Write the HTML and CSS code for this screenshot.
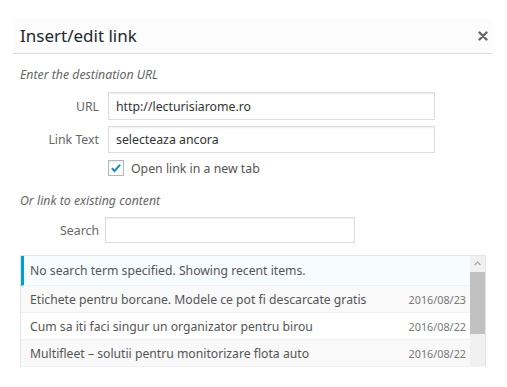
FILE: index.html
```html
<!DOCTYPE html>
<html>
<head>
<meta charset="utf-8">
<link rel="stylesheet" href="styles.css">
</head>
<body>
<div class="dialog">
  <div class="head">
    <h1 class="title">Insert/edit link</h1>
    <button class="close" aria-label="Close">
      <svg width="10" height="10" viewBox="0 0 10 10"><path d="M1.5 1.5 L8.5 8.5 M8.5 1.5 L1.5 8.5" stroke="#666" stroke-width="2.4" stroke-linecap="round"/></svg>
    </button>
  </div>
  <div class="body">
    <p class="hint hint-first">Enter the destination URL</p>
    <div class="field field-url">
      <label class="label">URL</label>
      <div class="input input-url">http://lecturisiarome.ro</div>
    </div>
    <div class="field field-text">
      <label class="label">Link Text</label>
      <div class="input input-text">selecteaza ancora</div>
    </div>
    <div class="check-row">
      <span class="checkbox">
        <svg width="14" height="14" viewBox="0 0 14 14"><path d="M2.8 7.2 L5.6 10 L11.2 3.6" fill="none" stroke="#1e8cbe" stroke-width="2"/></svg>
      </span>
      <span class="check-label">Open link in a new tab</span>
    </div>
    <p class="hint hint-second">Or link to existing content</p>
    <div class="field field-search">
      <label class="label label-search">Search</label>
      <div class="input input-search"></div>
    </div>
    <div class="results">
      <ul class="list">
        <li class="item notice">No search term specified. Showing recent items.</li>
        <li class="item alt"><span class="item-title">Etichete pentru borcane. Modele ce pot fi descarcate gratis</span><span class="date">2016/08/23</span></li>
        <li class="item"><span class="item-title">Cum sa iti faci singur un organizator pentru birou</span><span class="date">2016/08/22</span></li>
        <li class="item alt"><span class="item-title">Multifleet – solutii pentru monitorizare flota auto</span><span class="date">2016/08/22</span></li>
      </ul>
      <div class="scrollbar">
        <div class="arrow">
          <svg width="7" height="5" viewBox="0 0 7 5"><path d="M0.5 4 L3.5 1 L6.5 4" fill="none" stroke="#a3a3a3" stroke-width="1.2"/></svg>
        </div>
        <div class="thumb"></div>
      </div>
    </div>
  </div>
</div>
</body>
</html>
```

FILE: styles.css
```css
* { box-sizing: border-box; }
body {
  margin: 0;
  background: #fff;
  font-family: "Noto Sans", "Open Sans", sans-serif;
  color: #555;
}
.dialog {
  margin: 18px 0 0 13px;
  width: 479px;
}
.head {
  height: 36px;
  background: #fcfcfc;
  border-bottom: 1px solid #dcdcdc;
  display: flex;
  align-items: center;
  justify-content: space-between;
  padding: 0 3px 0 7px;
}
.title {
  margin: 0;
  font-size: 17px;
  font-weight: 400;
  color: #23282d;
  line-height: 22px;
}
.close {
  border: 0;
  background: none;
  padding: 0;
  width: 12px;
  height: 12px;
  display: flex;
  align-items: center;
  justify-content: center;
}
.body {
  padding: 0 6px 0 7px;
}
.hint {
  margin: 0;
  font-size: 12.3px;
  font-style: italic;
  line-height: 16px;
  color: #666;
}
.hint-first { margin-top: 13px; }
.hint-second { margin-top: 17px; }
.field {
  display: flex;
  align-items: center;
}
.label {
  width: 79px;
  flex: none;
  text-align: right;
  font-size: 12.3px;
  color: #666;
}
.input {
  border: 1px solid #ddd;
  box-shadow: inset 0 1px 2px rgba(0,0,0,0.07);
  background: #fff;
  font-size: 12.3px;
  color: #333;
  display: flex;
  align-items: center;
  padding: 0 7px;
}
.field-url { margin-top: 9px; }
.input-url { margin-left: 9px; width: 327px; height: 28px; }
.field-text { margin-top: 6px; }
.input-text { margin-left: 9px; width: 327px; height: 27px; }
.check-row {
  margin-top: 7px;
  padding-left: 88px;
  display: flex;
  align-items: center;
  height: 16px;
}
.checkbox {
  width: 16px;
  height: 16px;
  border: 1px solid #b4b9be;
  box-shadow: inset 0 1px 2px rgba(0,0,0,0.1);
  display: flex;
  align-items: center;
  justify-content: center;
  background: #fff;
}
.check-label {
  margin-left: 7px;
  font-size: 12.3px;
  color: #555;
}
.field-search { margin-top: 8px; }
.input-search { margin-left: 6px; width: 250px; height: 26px; }
.results {
  margin-top: 12px;
  width: 466px;
  height: 112px;
  border: 1px solid #e5e5e5;
  border-bottom: 0;
  display: flex;
  overflow: hidden;
}
.list {
  list-style: none;
  margin: 0;
  padding: 0;
  flex: 1;
}
.item {
  height: 27px;
  border-bottom: 1px solid #f1f1f1;
  display: flex;
  align-items: center;
  justify-content: space-between;
  padding: 0 4px 0 9px;
  font-size: 12.2px;
  color: #555;
}
.item.notice {
  height: 30px;
  background: #f7fcfe;
  border-left: 3px solid #00a0d2;
  padding-left: 6px;
  border-bottom: 1px solid #eef1f2;
}
.item.alt { background: #f9f9f9; }
.date {
  font-size: 10.8px;
  color: #777;
}
.scrollbar {
  width: 15px;
  flex: none;
  background: #f1f1f1;
  display: flex;
  flex-direction: column;
}
.arrow {
  height: 15px;
  display: flex;
  align-items: center;
  justify-content: center;
}
.thumb {
  margin-top: 1px;
  height: 62px;
  background: #c1c1c1;
}
```
